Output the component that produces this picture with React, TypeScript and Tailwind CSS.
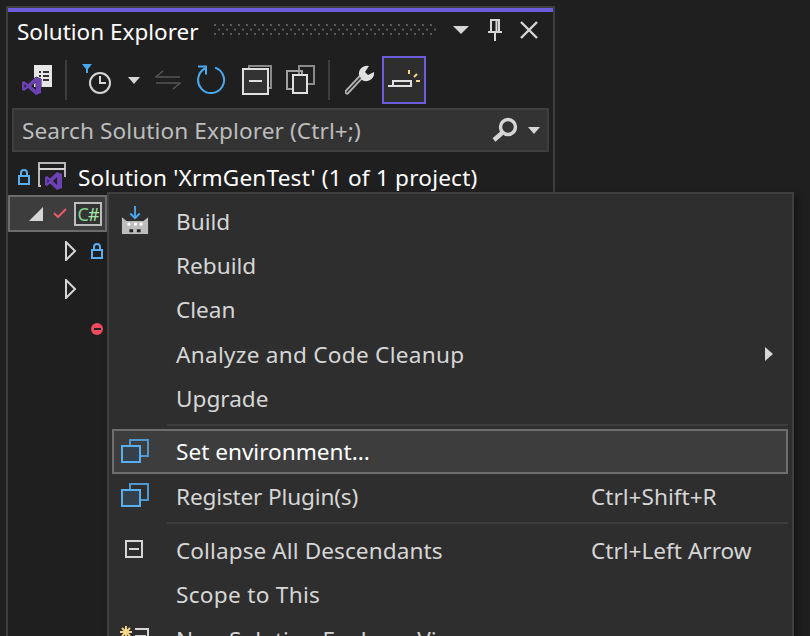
import React from 'react'

const font = { fontFamily: '"Noto Sans", sans-serif' }

const Sep = () => <div className="w-[2px] h-10 bg-[#3d3d3d]" />

const VS_LOGO = 'M15 13L20 15V29L15 31L7 24L3 27L1 26V18L3 17L7 20ZM15 18L10 22L15 26ZM3.5 20V24L5.5 22Z'

const CopyIcon = () => (
  <svg className="-mt-[2px]" width="28" height="26" viewBox="0 0 28 26" fill="none">
    <path d="M9 8V2h18v16h-7" stroke="#4f97d1" strokeWidth="2" fill="none" />
    <rect x="1" y="8" width="18" height="16" fill="#34404c" stroke="#58aeef" strokeWidth="2" />
  </svg>
)

const Item = ({ icon, label, shortcut, arrow, active, track }: { icon?: React.ReactNode; label: string; shortcut?: string; arrow?: boolean; active?: boolean; track?: string }) => (
  <div className={`flex items-center h-[44.3px] border-2 ${active ? 'border-[#6d6d6d] bg-[#3d3d3d] text-white' : 'border-transparent text-[#d6d6d6]'}`}>
    <div className="w-[62px] pl-[7px] flex items-center shrink-0">
      <div className="w-[28px] flex justify-center">{icon}</div>
    </div>
    <span className={`text-[22.6px] leading-none pt-[2px] whitespace-nowrap ${track ?? ''}`}>{label}</span>
    {shortcut && <span className="absolute left-[482px] text-[22.6px] leading-none pt-[2px]">{shortcut}</span>}
    {arrow && (
      <svg className="absolute left-[655px]" width="10" height="14" viewBox="0 0 10 14"><path d="M1 0l8 7-8 7z" fill="#d6d6d6" /></svg>
    )}
  </div>
)

const MenuSep = ({ h }: { h: string }) => (
  <div className={`flex items-center pl-[55px] ${h}`}>
    <div className="h-[2px] w-full bg-[#3d3d3d]" />
  </div>
)

export default function App() {
  return (
    <div className="relative w-[810px] h-[636px] overflow-hidden bg-[#1f1f1f]" style={font}>
      {/* solution explorer panel */}
      <div className="ml-[6px] mt-[6px] w-[549px] h-[700px] border-x-2 border-t-2 border-[#3d3d3d]">
        <div className="h-1 bg-[#6d5ddc]" />
        <div className="flex items-center h-[36px] mb-[4px] pl-[9px] pr-[14px]">
          <span className="w-[197px] mt-[4px] text-[22.5px] leading-none text-white whitespace-nowrap">Solution Explorer</span>
          <svg width="224" height="12" viewBox="0 0 224 12">
            <defs>
              <pattern id="grip" width="16" height="9" patternUnits="userSpaceOnUse">
                <rect x="0" y="0" width="2" height="2" fill="#5a5a5a" />
                <rect x="8" y="0" width="2" height="2" fill="#5a5a5a" />
                <rect x="4" y="4.5" width="2" height="2" fill="#5a5a5a" />
                <rect x="12" y="4.5" width="2" height="2" fill="#5a5a5a" />
              </pattern>
            </defs>
            <rect width="224" height="11" fill="url(#grip)" />
          </svg>
          <svg className="ml-[15px]" width="16" height="8" viewBox="0 0 16 8"><path d="M0 0h16L8 8z" fill="#d6d6d6" /></svg>
          <svg className="ml-[19px]" width="14" height="22" viewBox="0 0 14 22" fill="none" stroke="#d6d6d6" strokeWidth="2">
            <path d="M3 1h8v12H3zM0 13h14M7 13v9M8.5 1v12" />
          </svg>
          <svg className="ml-[17px]" width="20" height="18" viewBox="0 0 20 18" fill="none" stroke="#d6d6d6" strokeWidth="2.4"><path d="M2 1l16 16M18 1L2 17" /></svg>
        </div>
        {/* toolbar */}
        <div className="flex items-center h-[56px] pl-[13px]">
          <svg width="34" height="32" viewBox="0 0 34 32">
            <rect x="13" y="1" width="18" height="22" fill="#e6e6e6" />
            <path d="M18 7h2v2h-2zM22 7h6v2h-6zM18 11h2v2h-2zM22 11h6v2h-6zM18 15h2v2h-2zM22 15h6v2h-6z" fill="#333" />
            <path d={VS_LOGO} fill="#6c41b5" fillRule="evenodd" stroke="#1f1f1f" strokeWidth="1" paintOrder="stroke" />
          </svg>
          <div className="ml-[10px] mr-[15px]"><Sep /></div>
          <svg width="32" height="32" viewBox="0 0 32 32" fill="none">
            <path d="M0 0h10L6 5v4H4V5z" fill="#4aa8ef" />
            <circle cx="18" cy="19" r="10" stroke="#d6d6d6" strokeWidth="2" />
            <path d="M18 12v7h6" stroke="#d6d6d6" strokeWidth="2" />
          </svg>
          <svg className="ml-[14px]" width="12" height="7" viewBox="0 0 12 7"><path d="M0 0h12L6 7z" fill="#d6d6d6" /></svg>
          <svg className="ml-[15px]" width="26" height="20" viewBox="0 0 26 20" fill="none" stroke="#555" strokeWidth="1.6"><path d="M8 1L1 7h24M18 19l7-6H1" /></svg>
          <svg className="ml-[16px]" width="30" height="30" viewBox="0 0 30 30" fill="none" stroke="#4aa8ef" strokeWidth="2">
            <path d="M8 3.5A13 13 0 1 0 18 2.6M1 1.5h8v8" />
          </svg>
          <svg className="ml-[15px]" width="30" height="30" viewBox="0 0 30 30" fill="none">
            <path d="M7 3V1h22v22h-3" stroke="#8a8a8a" strokeWidth="2" />
            <rect x="1" y="4" width="25" height="25" fill="#333" stroke="#e0e0e0" strokeWidth="2" />
            <path d="M7 16h13" stroke="#e0e0e0" strokeWidth="2" />
          </svg>
          <svg className="ml-[14px]" width="30" height="30" viewBox="0 0 30 30" fill="none" strokeWidth="2">
            <rect x="13" y="1" width="15" height="18" stroke="#8a8a8a" />
            <rect x="1" y="6" width="15" height="18" stroke="#a0a0a0" />
            <rect x="7" y="10" width="14" height="18" stroke="#e0e0e0" fill="#2a2a2a" />
          </svg>
          <div className="ml-[12px] mr-[15px]"><Sep /></div>
          <svg width="30" height="30" viewBox="0 0 30 30" fill="none">
            <path d="M2 27L16 12" stroke="#b8b8b8" strokeWidth="5" strokeLinecap="round" />
            <path d="M2 27L16 12" stroke="#333" strokeWidth="1.6" strokeLinecap="round" />
            <path d="M24 1a8 8 0 0 0-10 9l3 5a8 8 0 0 0 12-8l-6 3-3-3z" fill="#e0e0e0" />
          </svg>
          <div className="ml-[7px] flex items-center justify-center w-11 h-12 bg-[#2e2e2e] border-2 border-[#6d5ddc]">
            <svg width="32" height="20" viewBox="0 0 32 20" fill="none">
              <path d="M0 16h7M5 16v-5h18v5H5" stroke="#e0e0e0" strokeWidth="2" />
              <path d="M21 0v4" stroke="#f5d78c" strokeWidth="2" />
              <path d="M26 7l3-3" stroke="#f5d78c" strokeWidth="2" />
              <path d="M28 11h4" stroke="#f5d78c" strokeWidth="2" />
            </svg>
          </div>
        </div>
        {/* search */}
        <div className="flex items-center mx-1 h-[44px] bg-[#333333] border-2 border-[#3f3f3f]">
          <span className="ml-2 flex-1 pt-[3px] text-[22.6px] tracking-[0.1px] leading-none text-[#bdbdbd]">Search Solution Explorer (Ctrl+;)</span>
          <svg width="28" height="28" viewBox="0 0 28 28" fill="none">
            <circle cx="17" cy="11" r="7.5" stroke="#d6d6d6" strokeWidth="3.4" />
            <path d="M11 17l-8 7" stroke="#d6d6d6" strokeWidth="4.4" />
          </svg>
          <svg className="ml-[9px] mr-[7px]" width="12" height="7" viewBox="0 0 12 7"><path d="M0 0h12L6 7z" fill="#d6d6d6" /></svg>
        </div>
        {/* tree */}
        <div className="flex items-center h-[40px] mt-[5px] pl-[10px]">
          <svg width="12" height="16" viewBox="0 0 12 16" fill="none" stroke="#58aeef" strokeWidth="2"><rect x="1" y="7" width="10" height="8" /><path d="M3 7V4a3 3 0 0 1 6 0v3" /></svg>
          <svg className="ml-[8px] -mt-[3px]" width="30" height="28" viewBox="0 0 30 28" fill="none">
            <path d="M3 24H1V1h26v14" stroke="#b8b8b8" strokeWidth="2" />
            <path d="M1 7h26" stroke="#d6d6d6" strokeWidth="2" />
            <path d="M19 10L24 12V26L19 28L12 21.5L9 24L7 23V15L9 14L12 16.5ZM19 15L15 19L19 23ZM9.5 17V21L11 19Z" fill="#6c41b5" fillRule="evenodd" />
          </svg>
          <span className="ml-[10px] pt-[2px] text-[22.6px] tracking-[0.2px] leading-none text-white whitespace-nowrap">Solution 'XrmGenTest' (1 of 1 project)</span>
        </div>
        <div className="flex items-center h-[37px] w-[99px] -mt-[2px] bg-[#3d3d3d] border-2 border-[#6d6d6d]">
          <svg className="ml-[19px]" width="14" height="14" viewBox="0 0 14 14"><path d="M14 0v14H0z" fill="#d6d6d6" /></svg>
          <svg className="ml-[10px]" width="14" height="11" viewBox="0 0 14 11" fill="none" stroke="#e8596a" strokeWidth="2"><path d="M1 5l4 4 8-8" /></svg>
          <div className="ml-[7px] w-[28px] h-[24px] flex items-center justify-center border-2 border-[#bdbdbd] bg-[#333] text-[18px] leading-none text-[#7fd18c] tracking-[-1px]">C<span className="text-[#a4e8a8]">#</span></div>
        </div>
        <div className="flex items-center h-[38px] pl-[57px]">
          <svg width="12" height="20" viewBox="0 0 12 20" fill="none" stroke="#d6d6d6" strokeWidth="2"><path d="M1 1v18l9-9z" /></svg>
          <svg className="ml-[14px]" width="12" height="16" viewBox="0 0 12 16" fill="none" stroke="#58aeef" strokeWidth="2"><rect x="1" y="7" width="10" height="8" /><path d="M3 7V4a3 3 0 0 1 6 0v3" /></svg>
        </div>
        <div className="flex items-center h-[38px] pl-[57px]">
          <svg width="12" height="20" viewBox="0 0 12 20" fill="none" stroke="#d6d6d6" strokeWidth="2"><path d="M1 1v18l9-9z" /></svg>
        </div>
        <div className="flex items-center h-[38px] pt-1 pl-[83px]">
          <div className="w-3 h-3 rounded-full bg-[#ef4a5e] flex items-center justify-center"><div className="w-[7px] h-[2px] bg-[#222]" /></div>
        </div>
      </div>

      {/* context menu */}
      <div className="absolute left-[107px] top-[192px] w-[687px] h-[480px] pl-[3px] pr-[4px] pt-[5px] bg-[#2e2e2e] border-2 border-[#3f3f3f] shadow-[4px_4px_8px_rgba(0,0,0,0.35)]">
        <Item label="Build" icon={
          <svg className="-mt-[3px] shrink-0" width="28" height="30" viewBox="0 0 30 30" fill="none">
            <path d="M15 0v12M10 8l5 5 5-5" stroke="#4aa8ef" strokeWidth="2" />
            <path d="M1 12l5 4h18l5-4v18H1z" fill="#bdbdbd" />
            <path d="M7 18h3v3H7zM14 18h3v3h-3zM20 18h3v3h-3z" fill="#fff" />
            <path d="M9 25h4v3H9zM17 25h4v3h-4z" fill="#222" />
          </svg>
        } />
        <Item label="Rebuild" />
        <Item label="Clean" />
        <Item label="Analyze and Code Cleanup" arrow track="tracking-[0.27px]" />
        <Item label="Upgrade" />
        <MenuSep h="h-[9px]" />
        <Item label="Set environment..." icon={<CopyIcon />} active />
        <Item label="Register Plugin(s)" shortcut="Ctrl+Shift+R" icon={<CopyIcon />} track="tracking-[-0.16px]" />
        <MenuSep h="h-[10px]" />
        <Item label="Collapse All Descendants" shortcut="Ctrl+Left Arrow" track="tracking-[0.08px]" icon={
          <svg className="-ml-[3px] -mt-[2px]" width="18" height="18" viewBox="0 0 18 18" fill="none" stroke="#d6d6d6" strokeWidth="2"><rect x="1" y="1" width="16" height="16" /><path d="M4 9h10" /></svg>
        } />
        <Item label="Scope to This" track="tracking-[0.3px]" />
        <Item label="New Solution Explorer View" icon={
          <svg className="-mt-[4px] shrink-0" width="32" height="24" viewBox="0 0 32 24" fill="none">
            <path d="M7 1v12M1 7h12M3 3l8 8M11 3L3 11" stroke="#f5d78c" strokeWidth="2" />
            <path d="M16 4h13v14M16 11h11M16 18h11" stroke="#d6d6d6" strokeWidth="2" />
          </svg>
        } />
      </div>
    </div>
  )
}
